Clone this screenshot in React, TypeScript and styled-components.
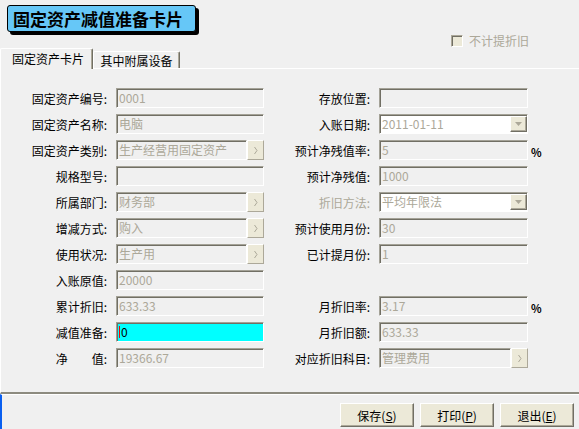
import React from "react";
import styled, { createGlobalStyle } from "styled-components";

const GlobalStyle = createGlobalStyle`
  body {
    margin: 0;
    background: #f0f0f0;
    font-family: "Noto Sans CJK SC", "Noto Sans", sans-serif;
  }
`;

type FieldKind = "text" | "pick" | "combo" | "unit" | "edit";

interface FieldDef {
  label: string;
  kind: FieldKind;
  value: string;
  dim?: boolean;
}

// 左右两列，每行一项（右列第 8 行为空）
const rows: [FieldDef, FieldDef | null][] = [
  [{ label: "固定资产编号:", kind: "text", value: "0001" }, { label: "存放位置:", kind: "text", value: "" }],
  [{ label: "固定资产名称:", kind: "text", value: "电脑" }, { label: "入账日期:", kind: "combo", value: "2011-01-11" }],
  [{ label: "固定资产类别:", kind: "pick", value: "生产经营用固定资产" }, { label: "预计净残值率:", kind: "unit", value: "5" }],
  [{ label: "规格型号:", kind: "text", value: "" }, { label: "预计净残值:", kind: "text", value: "1000" }],
  [{ label: "所属部门:", kind: "pick", value: "财务部" }, { label: "折旧方法:", kind: "combo", value: "平均年限法", dim: true }],
  [{ label: "增减方式:", kind: "pick", value: "购入" }, { label: "预计使用月份:", kind: "text", value: "30" }],
  [{ label: "使用状况:", kind: "pick", value: "生产用" }, { label: "已计提月份:", kind: "text", value: "1" }],
  [{ label: "入账原值:", kind: "text", value: "20000" }, null],
  [{ label: "累计折旧:", kind: "text", value: "633.33" }, { label: "月折旧率:", kind: "unit", value: "3.17" }],
  [{ label: "减值准备:", kind: "edit", value: "0" }, { label: "月折旧额:", kind: "text", value: "633.33" }],
  [{ label: "净\u3000\u3000值:", kind: "text", value: "19366.67" }, { label: "对应折旧科目:", kind: "pick", value: "管理费用" }],
];

const Chevron = () => (
  <svg width="6" height="9" viewBox="0 0 6 9">
    <path d="M1.5 1 L4 4.5 L1.5 8" fill="none" stroke="#aca899" strokeWidth="1" />
  </svg>
);

const DownArrow = () => (
  <svg width="7" height="4" viewBox="0 0 7 4">
    <path d="M0 0 H7 L3.5 4 Z" fill="#aca899" />
  </svg>
);

const Field: React.FC<{ def: FieldDef; wide?: boolean }> = ({ def, wide }) => {
  const w = wide ? 149 : 148;
  if (def.kind === "combo") {
    return (
      <FieldRow $w={w}>
        <TextBox $bg="#ffffff">
          <BoxText>{def.value}</BoxText>
          <DropButton>
            <DownArrow />
          </DropButton>
        </TextBox>
      </FieldRow>
    );
  }
  if (def.kind === "pick") {
    return (
      <FieldRow $w={w}>
        <TextBox>
          <BoxText>{def.value}</BoxText>
        </TextBox>
        <PickButton>
          <Chevron />
        </PickButton>
      </FieldRow>
    );
  }
  if (def.kind === "edit") {
    return (
      <FieldRow $w={w}>
        <TextBox $bg="#00ffff">
          <Caret />
          <BoxText $active>{def.value}</BoxText>
        </TextBox>
      </FieldRow>
    );
  }
  if (def.kind === "unit") {
    return (
      <FieldRow $w={w}>
        <TextBox $fixed={w}>
          <BoxText>{def.value}</BoxText>
        </TextBox>
        <Unit>%</Unit>
      </FieldRow>
    );
  }
  return (
    <FieldRow $w={w}>
      <TextBox>
        <BoxText>{def.value}</BoxText>
      </TextBox>
    </FieldRow>
  );
};

const App: React.FC = () => {
  return (
    <Window>
      <GlobalStyle />
      <Header>
        <TitleBadge>固定资产减值准备卡片</TitleBadge>
        <CheckWrap>
          <CheckBox />
          <CheckLabel>不计提折旧</CheckLabel>
        </CheckWrap>
      </Header>
      <TabStrip>
        <Tab $active>固定资产卡片</Tab>
        <Tab>其中附属设备</Tab>
      </TabStrip>
      <Panel>
        <FormGrid>
          {rows.map(([left, right], i) => (
            <React.Fragment key={i}>
              <Label>{left.label}</Label>
              <Field def={left} />
              <Label $dim={right?.dim}>{right ? right.label : ""}</Label>
              {right ? <Field def={right} wide /> : <span />}
            </React.Fragment>
          ))}
        </FormGrid>
      </Panel>
      <Footer>
        <ActionButton>
          保存(<u>S</u>)
        </ActionButton>
        <ActionButton>
          打印(<u>P</u>)
        </ActionButton>
        <ActionButton>
          退出(<u>E</u>)
        </ActionButton>
      </Footer>
    </Window>
  );
};

const Window = styled.div`
  width: 579px;
  height: 429px;
  display: flex;
  flex-direction: column;
  background: #f0f0f0;
  overflow: hidden;
  font-size: 12px;
  color: #000;
`;

const Header = styled.div`
  height: 48px;
  display: flex;
  justify-content: space-between;
  align-items: flex-start;
  flex-shrink: 0;
`;

const TitleBadge = styled.div`
  margin: 5px 0 0 7px;
  width: 189px;
  height: 27px;
  box-sizing: border-box;
  display: flex;
  align-items: center;
  padding-left: 5px;
  background: #66c7f7;
  border: 1px solid #000;
  border-radius: 3px;
  box-shadow: 3px 3px 0 #000;
  font-size: 17px;
  font-weight: 700;
  white-space: nowrap;
`;

const CheckWrap = styled.div`
  align-self: flex-end;
  margin: 0 50px 1px 0;
  display: flex;
  align-items: center;
  gap: 6px;
`;

const CheckBox = styled.div`
  width: 12px;
  height: 12px;
  box-sizing: border-box;
  background: #ece9d8;
  border: 1px solid;
  border-color: #aca899 #fff #fff #aca899;
  box-shadow: inset 1px 1px 0 #716f64;
`;

const CheckLabel = styled.span`
  color: #aca899;
  line-height: 12px;
`;

const TabStrip = styled.div`
  height: 20px;
  display: flex;
  align-items: flex-end;
  flex-shrink: 0;
`;

const Tab = styled.div<{ $active?: boolean }>`
  position: relative;
  z-index: ${(p) => (p.$active ? 1 : 0)};
  width: ${(p) => (p.$active ? 93 : 87)}px;
  height: ${(p) => (p.$active ? 21 : 17)}px;
  margin-bottom: ${(p) => (p.$active ? -1 : 0)}px;
  box-sizing: border-box;
  display: flex;
  align-items: center;
  justify-content: center;
  padding: ${(p) => (p.$active ? "0 0 1px 3px" : "0")};
  background: #f0f0f0;
  border-top: 1px solid #fff;
  border-left: 1px solid #fff;
  border-right: 1px solid #716f64;
  box-shadow: inset -1px 0 0 #aca899;
  border-radius: 2px 2px 0 0;
  white-space: nowrap;
`;

const Panel = styled.div`
  flex: 1;
  box-sizing: border-box;
  border-top: 1px solid #fff;
  border-left: 1px solid #fff;
  border-bottom: 2px solid #8d8b7f;
  padding-top: 19px;
`;

const FormGrid = styled.div`
  display: grid;
  grid-template-columns: 107px 148px 99px 149px;
  grid-auto-rows: 20px;
  column-gap: 8px;
  row-gap: 6px;
`;

const Label = styled.div<{ $dim?: boolean }>`
  display: flex;
  align-items: center;
  justify-content: flex-end;
  padding-right: 1px;
  color: ${(p) => (p.$dim ? "#aca899" : "#000")};
  white-space: pre;
`;

const FieldRow = styled.div<{ $w: number }>`
  width: ${(p) => p.$w}px;
  height: 20px;
  display: flex;
`;

const TextBox = styled.div<{ $bg?: string; $fixed?: number }>`
  flex: ${(p) => (p.$fixed ? `0 0 ${p.$fixed}px` : "1")};
  min-width: 0;
  height: 20px;
  box-sizing: border-box;
  display: flex;
  align-items: center;
  background: ${(p) => p.$bg || "#f0f0f0"};
  border: 1px solid;
  border-color: #a4a297 #fff #fff #a4a297;
  box-shadow: inset 1px 1px 0 #716f64;
  padding-left: 2px;
`;

const BoxText = styled.span<{ $active?: boolean }>`
  flex: 1;
  color: ${(p) => (p.$active ? "#000" : "#aca899")};
  white-space: nowrap;
  overflow: hidden;
  line-height: 16px;
`;

const Caret = styled.span`
  flex-shrink: 0;
  width: 1px;
  height: 12px;
  margin-right: 1px;
  background: #ff0000;
`;

const PickButton = styled.div`
  width: 17px;
  height: 20px;
  flex-shrink: 0;
  box-sizing: border-box;
  display: flex;
  align-items: center;
  justify-content: center;
  background: #ece9d8;
  border: 1px solid;
  border-color: #fff #aca899 #aca899 #fff;
`;

const DropButton = styled.div`
  width: 17px;
  height: 16px;
  flex-shrink: 0;
  box-sizing: border-box;
  display: flex;
  align-items: center;
  justify-content: center;
  background: #ece9d8;
  border: 1px solid;
  border-color: #fff #716f64 #716f64 #fff;
  box-shadow: inset -1px -1px 0 #aca899;
`;

const Unit = styled.span`
  flex-shrink: 0;
  margin-left: 3px;
  align-self: flex-end;
  font-size: 11px;
  font-weight: 700;
  line-height: 16px;
`;

const Footer = styled.div`
  height: 35px;
  flex-shrink: 0;
  box-sizing: border-box;
  display: flex;
  justify-content: flex-end;
  align-items: flex-start;
  gap: 6px;
  padding: 8px 5px 0 0;
  border-top: 1px solid #fff;
  border-left: 2px solid #0a5ff0;
`;

const ActionButton = styled.button`
  width: 74px;
  height: 24px;
  padding: 0;
  box-sizing: border-box;
  font-family: inherit;
  font-size: 12px;
  color: #000;
  background: #ece9d8;
  border: 1px solid;
  border-color: #fff #716f64 #716f64 #fff;
  box-shadow: inset -1px -1px 0 #aca899;
  display: flex;
  align-items: center;
  justify-content: center;
`;

export default App;
